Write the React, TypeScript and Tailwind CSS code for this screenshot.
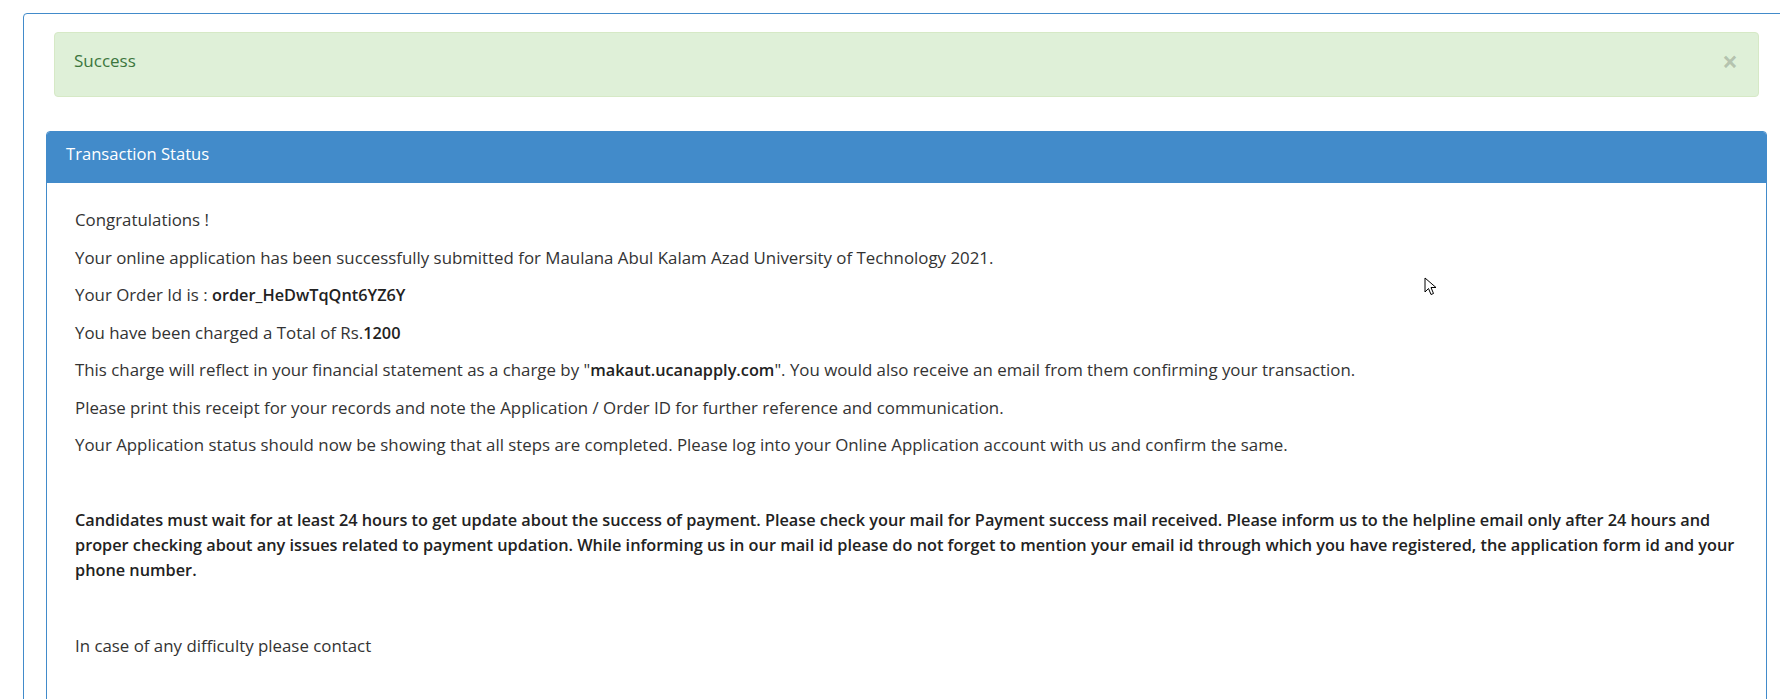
import React from 'react';

const B = ({ children }: { children: React.ReactNode }) => (
  <b className="font-semibold text-[16.3px] leading-[20px] text-[#222]">{children}</b>
);

const lines: React.ReactNode[] = [
  'Congratulations !',
  'Your online application has been successfully submitted for Maulana Abul Kalam Azad University of Technology 2021.',
  <>Your Order Id is : <B>order_HeDwTqQnt6YZ6Y</B></>,
  <>You have been charged a Total of Rs.<B>1200</B></>,
  <>
    This charge will reflect in your financial statement as a charge by "<B>makaut.ucanapply.com</B>". You would also receive an email from them confirming your transaction.
  </>,
  'Please print this receipt for your records and note the Application / Order ID for further reference and communication.',
  'Your Application status should now be showing that all steps are completed. Please log into your Online Application account with us and confirm the same.',
];

const App = () => {
  return (
    <div className="relative w-[1780px] h-[699px] overflow-hidden bg-white text-[#333] font-['Open_Sans',sans-serif]">
      <div className="ml-[23px] mt-[13px] w-[1767px] border border-[#428bca] rounded-[4px] px-[22px] pt-[18px] pb-10">
        <div className="mx-2 h-[65px] border border-[#d6e9c6] bg-[#dff0d8] rounded-[4px] flex items-center justify-between pl-[19px] pr-[20px] pb-[7px] text-[#3c763d]">
          <span className="text-[17px] font-medium">Success</span>
          <span className="text-[28px] font-bold leading-none text-black/20">×</span>
        </div>

        <div className="mt-[34px] border border-[#428bca] rounded-[4px]">
          <div className="h-[51px] bg-[#428bca] text-white pl-[19px] pb-[7px] flex items-center text-[16.6px] rounded-t-[3px]">
            Transaction Status
          </div>
          <div className="pl-[28px] pr-[28px] pt-[23px] pb-32 text-[16.85px]">
            {lines.map((l, i) => (
              <p key={i} className="leading-[27.5px] mb-[10px]">
                {l}
              </p>
            ))}
            <p className="mt-[49px] text-[16.3px] font-semibold leading-[25px] text-[#222]">
              Candidates must wait for at least 24 hours to get update about the success of payment. Please check your mail for Payment success mail received. Please inform us to the helpline email only after 24 hours and proper checking about any issues related to payment updation. While informing us in our mail id please do not forget to mention your email id through which you have registered, the application form id and your phone number.
            </p>
            <p className="mt-[49px] leading-[27.5px]">In case of any difficulty please contact</p>
          </div>
        </div>
      </div>

      {/* mouse pointer captured in the screenshot */}
      <svg className="absolute left-[1424px] top-[277px]" width="13" height="20" viewBox="0 0 13 20">
        <path d="M1 1 L1 15 L4.5 11.5 L7 17.5 L9.5 16.5 L7 10.5 L12 10.5 Z" fill="#fff" stroke="#000" strokeWidth="1" strokeLinejoin="round" />
      </svg>
    </div>
  );
};

export default App;
